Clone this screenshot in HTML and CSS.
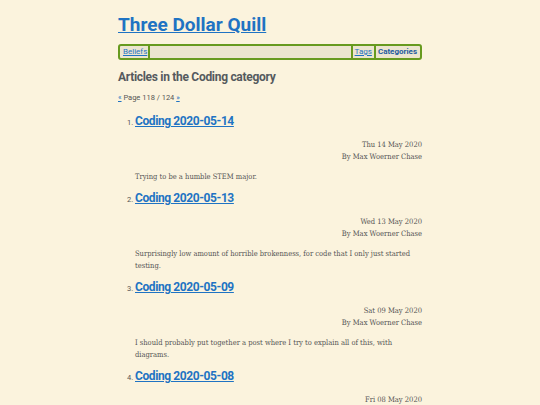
FILE: index.html
```html
<!DOCTYPE html>
<html lang="en">
<head>
<meta charset="utf-8">
<title>Three Dollar Quill</title>
<link rel="stylesheet" href="styles.css">
</head>
<body>
<div class="page">
  <header class="site-header">
    <h1 class="site-title"><a href="#">Three Dollar Quill</a></h1>
    <nav class="nav">
      <a class="nav-link nav-left" href="#">Beliefs</a>
      <span class="nav-spacer"></span>
      <a class="nav-link nav-right" href="#">Tags</a>
      <a class="nav-link nav-right nav-current" href="#">Categories</a>
    </nav>
  </header>
  <main>
    <h2 class="page-heading">Articles in the Coding category</h2>
    <p class="pager"><a href="#">«</a> Page 118 / 124 <a href="#">»</a></p>
    <ol class="articles" start="1">
      <li class="article">
        <h3 class="article-title"><a href="#">Coding 2020-05-14</a></h3>
        <div class="meta">
          <div>Thu 14 May 2020</div>
          <div>By Max Woerner Chase</div>
        </div>
        <p class="summary">Trying to be a humble STEM major.</p>
      </li>
      <li class="article">
        <h3 class="article-title"><a href="#">Coding 2020-05-13</a></h3>
        <div class="meta">
          <div>Wed 13 May 2020</div>
          <div>By Max Woerner Chase</div>
        </div>
        <p class="summary">Surprisingly low amount of horrible brokenness, for code that I only just started testing.</p>
      </li>
      <li class="article">
        <h3 class="article-title"><a href="#">Coding 2020-05-09</a></h3>
        <div class="meta">
          <div>Sat 09 May 2020</div>
          <div>By Max Woerner Chase</div>
        </div>
        <p class="summary">I should probably put together a post where I try to explain all of this, with diagrams.</p>
      </li>
      <li class="article">
        <h3 class="article-title"><a href="#">Coding 2020-05-08</a></h3>
        <div class="meta">
          <div>Fri 08 May 2020</div>
          <div>By Max Woerner Chase</div>
        </div>
        <p class="summary">More work on the tests.</p>
      </li>
    </ol>
  </main>
</div>
</body>
</html>
```
FILE: styles.css
```css
html, body {
  margin: 0;
  padding: 0;
  background: #fbf3dd;
}
body {
  font-family: "DejaVu Serif", serif;
  color: #555555;
  font-size: 8px;
}
.page {
  width: 304px;
  margin: 0 auto;
  padding-top: 14px;
}
a {
  color: #1f73c3;
}
.site-title {
  margin: 0;
  font-family: Roboto, sans-serif;
  font-size: 19px;
  font-weight: 700;
  line-height: 22px;
}
.nav {
  margin-top: 8px;
  display: flex;
  align-items: stretch;
  border: 2px solid #679a1f;
  border-radius: 3px;
  background: #ece5cf;
  height: 12px;
  padding: 0 2px;
  font-family: Roboto, sans-serif;
  font-size: 8px;
  line-height: 12px;
}
.nav-link {
  padding: 0 1px;
}
.nav-left {
  border-right: 2px solid #679a1f;
  padding-right: 1px;
}
.nav-right {
  border-left: 2px solid #679a1f;
  padding-left: 2px;
  margin-left: 1px;
}
.nav-current {
  font-weight: 700;
  text-decoration: none;
  color: #1e5b9e;
}
.nav-spacer {
  flex: 1;
}
.page-heading {
  margin: 9px 0 0 0;
  font-family: Roboto, sans-serif;
  font-size: 12px;
  font-weight: 700;
  line-height: 16px;
  letter-spacing: -0.3px;
  color: #555a5e;
}
.pager {
  margin: 8px 0 0 0;
  font-family: Roboto, sans-serif;
  font-size: 7.5px;
  line-height: 10px;
}
.articles {
  margin: 10px 0 0 0;
  padding-left: 17px;
  font-family: Roboto, sans-serif;
  font-size: 7.5px;
}
.article {
  margin-bottom: 6px;
}
.article-title {
  margin: 0;
  font-family: Roboto, sans-serif;
  font-size: 12px;
  font-weight: 700;
  line-height: 16px;
  letter-spacing: -0.4px;
}
.meta {
  margin-top: 10px;
  text-align: right;
  font-family: "DejaVu Serif", serif;
  font-stretch: condensed;
  font-size: 7.5px;
  line-height: 12px;
}
.summary {
  margin: 8px 0 0 0;
  font-family: "DejaVu Serif", serif;
  font-stretch: condensed;
  font-size: 7.5px;
  line-height: 12.5px;
}
```
